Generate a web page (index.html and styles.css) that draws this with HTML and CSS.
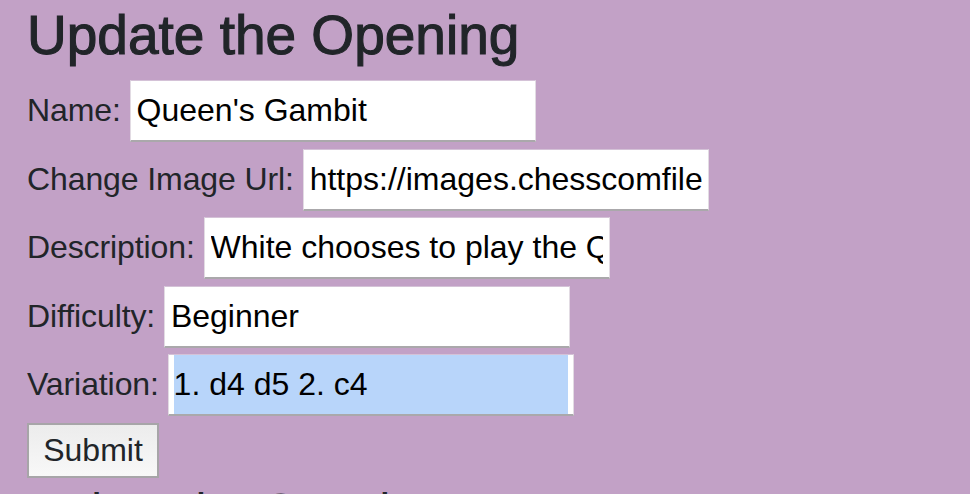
FILE: index.html
```html
<!DOCTYPE html>
<html lang="en">
<head>
<meta charset="utf-8">
<title>Update the Opening</title>
<link rel="stylesheet" href="styles.css">
</head>
<body>
<main class="page">
  <h1 class="title">Update the Opening</h1>
  <form class="form">
    <label class="row">Name: <input class="field" type="text" value="Queen's Gambit"></label>
    <label class="row">Change Image Url: <input class="field" type="text" value="https://images.chesscomfiles.com/uploads/queens-gambit.png"></label>
    <label class="row">Description: <input class="field" type="text" value="White chooses to play the Queen's Gambit"></label>
    <label class="row">Difficulty: <input class="field" type="text" value="Beginner"></label>
    <label class="row">Variation: <input class="field selected" type="text" value="1. d4 d5 2. c4"></label>
    <div class="actions"><button class="submit" type="button">Submit</button></div>
  </form>
  <h2 class="next">Delete the Opening</h2>
</main>
</body>
</html>
```

FILE: styles.css
```css
html, body {
  margin: 0;
  padding: 0;
  background: #c2a1c6;
}
body {
  font-family: "Liberation Sans", Arial, sans-serif;
  color: #212529;
  overflow: hidden;
  height: 494px;
}
.page {
  padding-left: 27px;
}
.title {
  margin: 0 0 11px 0;
  padding-top: 2px;
  font-family: "Liberation Sans", Arial, sans-serif;
  font-weight: 500;
  font-size: 55px;
  line-height: 66px;
  color: #212529;
  -webkit-text-stroke: 1.1px #212529;
}
.form {
  display: flex;
  flex-direction: column;
  gap: 6.5px;
  margin: 0;
}
.row {
  display: flex;
  align-items: baseline;
  font-size: 32px;
  line-height: 62px;
  height: 62px;
  white-space: pre;
  letter-spacing: -0.1px;
}
.field {
  box-sizing: border-box;
  width: 406px;
  height: 62px;
  margin: 0;
  padding: 0 6px;
  font-family: "Liberation Sans", Arial, sans-serif;
  font-size: 32px;
  letter-spacing: 0;
  color: #000;
  background: #fff;
  border-style: solid;
  border-width: 1px 1px 2px 1px;
  border-color: #d4c2d7 #e2dbe3 #aaa8ab #e2dbe3;
  border-radius: 0;
  outline: none;
}
.field.selected {
  padding: 0 5px;
  background-color: #fff;
  background-image: linear-gradient(#b8d5fa, #b8d5fa);
  background-origin: content-box;
  background-clip: border-box;
  background-repeat: no-repeat;
  background-size: 100% 100%;
}
.actions {
  padding-top: 1.5px;
}
.submit {
  box-sizing: border-box;
  height: 55px;
  width: 132px;
  margin: 0;
  padding: 0 14px;
  font-family: "Liberation Sans", Arial, sans-serif;
  font-size: 32px;
  color: #212529;
  background: linear-gradient(#ececec, #f8f8f8);
  border: 2px solid #a7a5a8;
  border-radius: 0;
}
.next {
  margin: 4px 0 0 3px;
  font-size: 48px;
  font-weight: 500;
  line-height: 57px;
  color: #212529;
}
```
